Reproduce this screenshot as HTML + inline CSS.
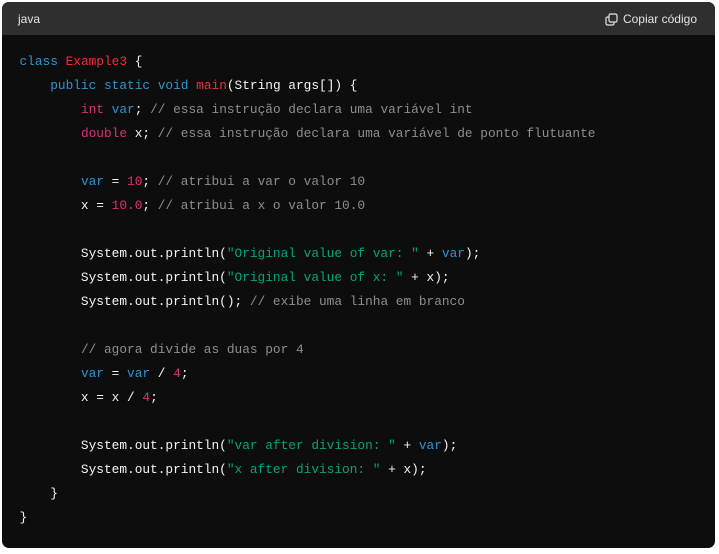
<!DOCTYPE html>
<html><head><meta charset="utf-8"><style>
html,body{margin:0;padding:0;background:#fff;width:719px;height:554px;overflow:hidden}
.box{position:absolute;left:2px;top:2px;width:713px;height:546px;border-radius:7px;overflow:hidden;background:#0d0d0d}
.hd{height:33px;background:#2f2f2f;color:#e3e3e3;font:12px "Liberation Sans",sans-serif;position:relative}
.hd .l{position:absolute;left:16px;top:10px}
.hd .r{position:absolute;right:18px;top:10px;display:flex;align-items:center;gap:5px}
pre{margin:0;padding:15px 0 0 17.5px;font:12.8px/24px "Liberation Mono",monospace;color:#f5f5f5}
.k{color:#2e95d3}.t{color:#f22c3d}.n{color:#df3079}.s{color:#00a67d}.c{color:#8e8e8e}
</style></head><body><div class="box">
<div class="hd"><span class="l">java</span><span class="r"><svg width="13" height="13" viewBox="0 0 13 13" fill="none" stroke="#e3e3e3" stroke-width="1.2"><rect x="4" y="1" width="8" height="8" rx="1.5"/><path d="M4 4H2.5A1.5 1.5 0 0 0 1 5.5v5A1.5 1.5 0 0 0 2.5 12h5A1.5 1.5 0 0 0 9 10.5V9"/></svg>Copiar código</span></div>
<pre><span class="k">class</span> <span class="t">Example3</span> {
    <span class="k">public</span> <span class="k">static</span> <span class="k">void</span> <span class="t">main</span>(String args[]) {
        <span class="n">int</span> <span class="k">var</span>; <span class="c">// essa instrução declara uma variável int</span>
        <span class="n">double</span> x; <span class="c">// essa instrução declara uma variável de ponto flutuante</span>

        <span class="k">var</span> = <span class="n">10</span>; <span class="c">// atribui a var o valor 10</span>
        x = <span class="n">10.0</span>; <span class="c">// atribui a x o valor 10.0</span>

        System.out.println(<span class="s">"Original value of var: "</span> + <span class="k">var</span>);
        System.out.println(<span class="s">"Original value of x: "</span> + x);
        System.out.println(); <span class="c">// exibe uma linha em branco</span>

        <span class="c">// agora divide as duas por 4</span>
        <span class="k">var</span> = <span class="k">var</span> / <span class="n">4</span>;
        x = x / <span class="n">4</span>;

        System.out.println(<span class="s">"var after division: "</span> + <span class="k">var</span>);
        System.out.println(<span class="s">"x after division: "</span> + x);
    }
}</pre>
</div></body></html>
